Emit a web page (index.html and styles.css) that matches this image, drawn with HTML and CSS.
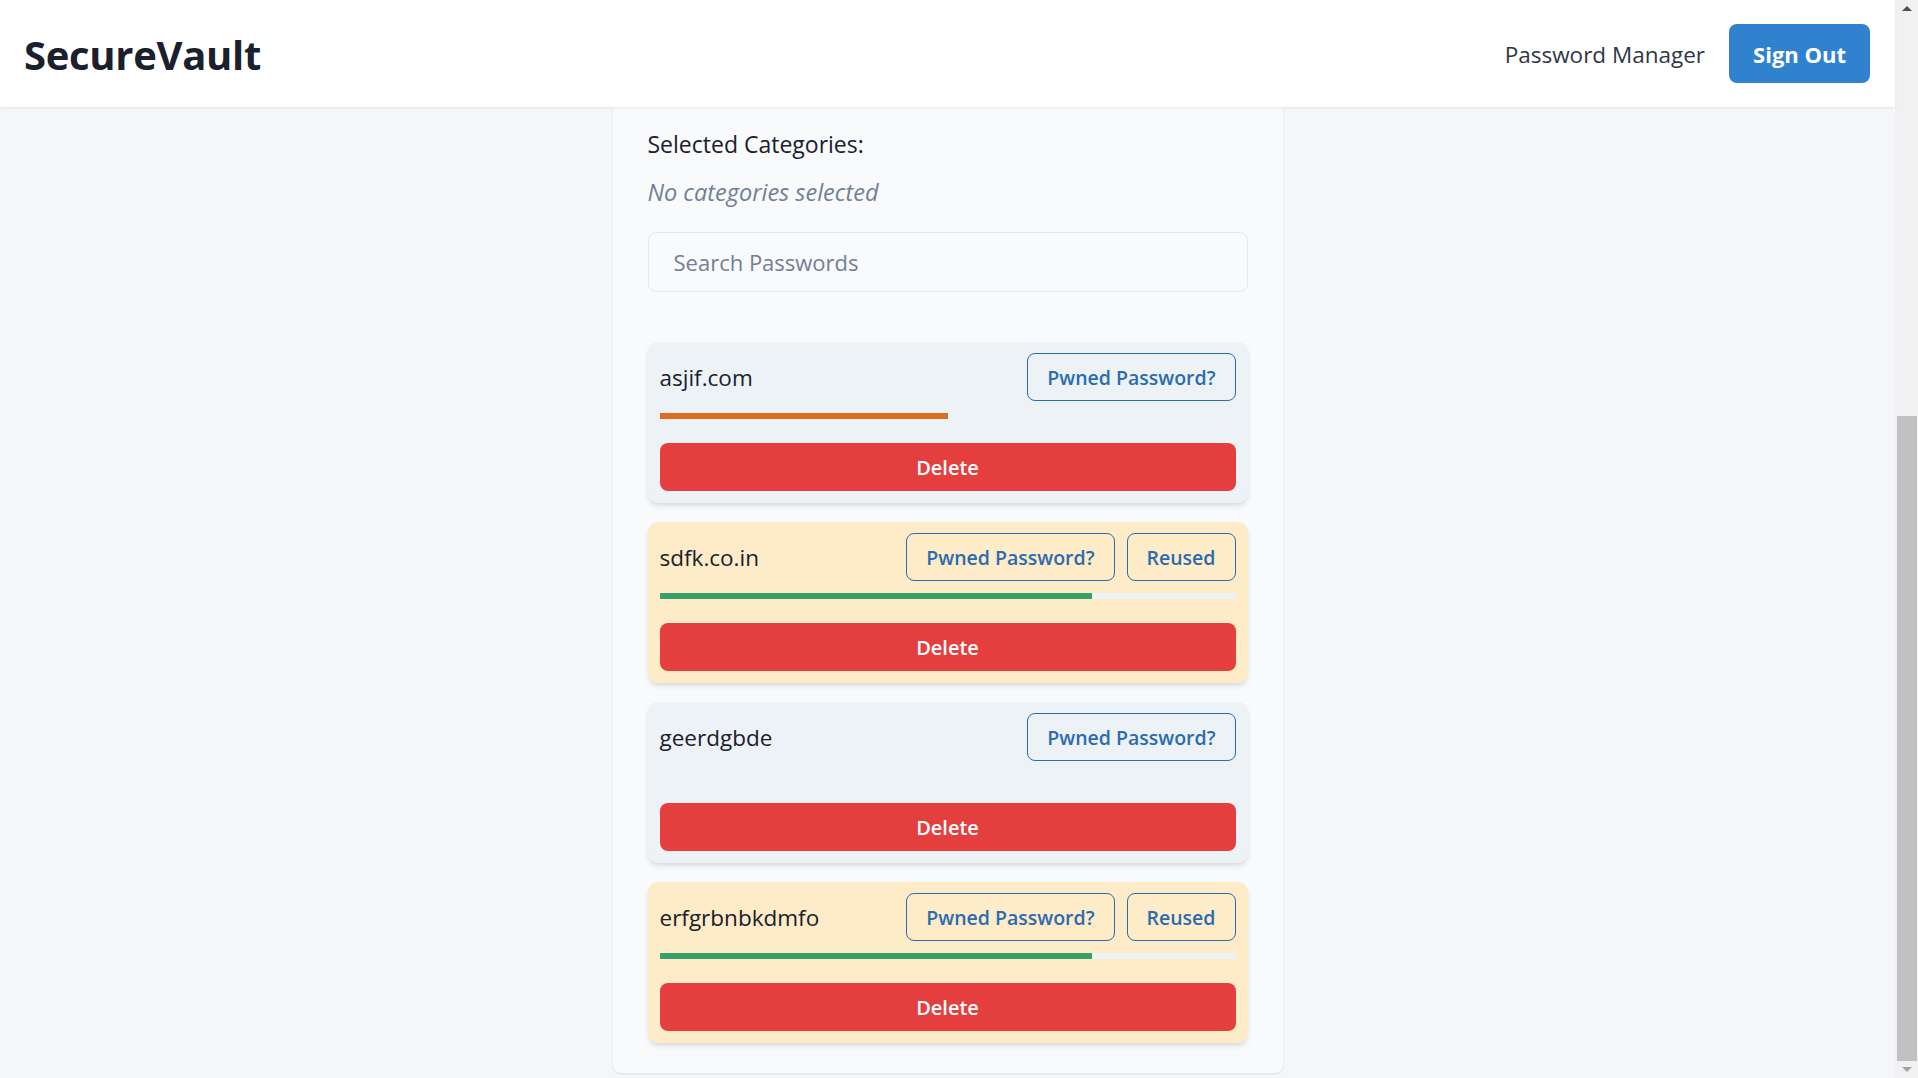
FILE: index.html
```html
<!DOCTYPE html>
<html lang="en">
<head>
<meta charset="utf-8">
<title>SecureVault</title>
<link rel="stylesheet" href="styles.css">
</head>
<body>
<div class="window">
  <div class="app">
    <header class="topbar">
      <div class="logo">SecureVault</div>
      <nav class="topnav">
        <span class="nav-link">Password Manager</span>
        <button class="btn-signout">Sign Out</button>
      </nav>
    </header>
    <main class="page">
      <section class="card">
        <div class="cat-label">Selected Categories:</div>
        <div class="cat-empty">No categories selected</div>
        <input class="search" type="text" placeholder="Search Passwords">
        <ul class="entries">
          <li class="entry">
            <div class="entry-row">
              <span class="entry-name">asjif.com</span>
              <div class="entry-actions">
                <button class="btn-outline">Pwned Password?</button>
              </div>
            </div>
            <div class="meter"><div class="meter-fill fill-orange" style="width:50%"></div></div>
            <button class="btn-delete">Delete</button>
          </li>
          <li class="entry entry-reused">
            <div class="entry-row">
              <span class="entry-name">sdfk.co.in</span>
              <div class="entry-actions">
                <button class="btn-outline">Pwned Password?</button>
                <button class="btn-outline">Reused</button>
              </div>
            </div>
            <div class="meter"><div class="meter-fill fill-green" style="width:75%"></div></div>
            <button class="btn-delete">Delete</button>
          </li>
          <li class="entry">
            <div class="entry-row">
              <span class="entry-name">geerdgbde</span>
              <div class="entry-actions">
                <button class="btn-outline">Pwned Password?</button>
              </div>
            </div>
            <div class="meter"><div class="meter-fill" style="width:0%"></div></div>
            <button class="btn-delete">Delete</button>
          </li>
          <li class="entry entry-reused">
            <div class="entry-row">
              <span class="entry-name">erfgrbnbkdmfo</span>
              <div class="entry-actions">
                <button class="btn-outline">Pwned Password?</button>
                <button class="btn-outline">Reused</button>
              </div>
            </div>
            <div class="meter"><div class="meter-fill fill-green" style="width:75%"></div></div>
            <button class="btn-delete">Delete</button>
          </li>
        </ul>
      </section>
    </main>
  </div>
  <div class="scrollbar" aria-hidden="true">
    <div class="sb-arrow sb-up"></div>
    <div class="sb-track"><div class="sb-thumb"></div></div>
    <div class="sb-arrow sb-down"></div>
  </div>
</div>
</body>
</html>
```
FILE: styles.css
```css
* { box-sizing: border-box; }
html, body { margin: 0; padding: 0; }
body {
  background: #f4f6f9;
  font-family: "Open Sans", "Noto Sans", sans-serif;
  color: #1a202c;
  overflow: hidden;
}
.window {
  display: flex;
  height: 1078px;
}
.app {
  flex: 1;
  display: flex;
  flex-direction: column;
  min-width: 0;
}
.topbar {
  position: relative;
  z-index: 2;
  flex: 0 0 107px;
  background: #ffffff;
  box-shadow: 0 1px 3px rgba(0,0,0,0.07);
  display: flex;
  align-items: center;
  justify-content: space-between;
  padding: 0 25px 0 24px;
}
.logo {
  font-size: 40px;
  font-weight: 700;
  color: #1a202c;
  letter-spacing: -0.3px;
  padding-top: 2px;
}
.topnav {
  display: flex;
  align-items: center;
  gap: 24px;
}
.nav-link {
  font-size: 22.5px;
  color: #2d3748;
  padding-top: 2px;
}
.btn-signout {
  height: 59px;
  padding: 0 24px;
  border: none;
  border-radius: 8px;
  background: #3182ce;
  color: #ffffff;
  font-family: inherit;
  font-size: 22px;
  font-weight: 700;
}
.page {
  flex: 1;
  padding: 0 0 5px;
}
.card {
  width: 670px;
  margin: 0 auto;
  background: #f8fafc;
  border-radius: 0 0 8px 8px;
  box-shadow: 0 1px 3px rgba(0,0,0,0.07), 0 1px 2px rgba(0,0,0,0.04);
  padding: 22px 35px 30px;
}
.cat-label {
  font-size: 23px;
  line-height: 30px;
}
.cat-empty {
  margin-top: 18px;
  font-size: 23.5px;
  line-height: 30px;
  font-style: italic;
  color: #718096;
}
.search {
  display: block;
  width: 100%;
  height: 60px;
  margin-top: 25px;
  padding: 0 25px;
  border: 1px solid #e2e8f0;
  border-radius: 8px;
  background: #f8fafc;
  font-family: inherit;
  font-size: 22px;
  color: #1a202c;
}
.search::placeholder { color: #718096; }
.entries {
  list-style: none;
  margin: 50px 0 0;
  padding: 0;
  display: flex;
  flex-direction: column;
  gap: 19px;
}
.entry {
  background: #edf2f7;
  border-radius: 10px;
  padding: 11px 12px 12px;
  box-shadow: 0 4px 6px -1px rgba(0,0,0,0.1), 0 2px 4px -1px rgba(0,0,0,0.06);
}
.entry-reused { background: #feebc8; }
.entry-row {
  display: flex;
  align-items: center;
  justify-content: space-between;
  height: 48px;
}
.entry-name {
  font-size: 22.5px;
}
.entry-actions {
  display: flex;
  gap: 12px;
}
.btn-outline {
  height: 48px;
  padding: 0 19px;
  border: 1px solid #2b6cb0;
  border-radius: 8px;
  background: transparent;
  color: #2b6cb0;
  font-family: inherit;
  font-size: 19.5px;
  font-weight: 600;
}
.meter {
  margin-top: 12px;
  height: 6px;
  background: #edf2f7;
}
.meter-fill { height: 100%; }
.fill-orange { background: #dd6b20; }
.fill-green { background: #38a169; }
.btn-delete {
  display: block;
  width: 100%;
  height: 48px;
  margin-top: 24px;
  border: none;
  border-radius: 8px;
  background: #e53e3e;
  color: #ffffff;
  font-family: inherit;
  font-size: 20px;
  font-weight: 600;
}
.scrollbar {
  flex: 0 0 23px;
  background: #f1f1f1;
  display: flex;
  flex-direction: column;
  align-items: center;
}
.sb-arrow {
  flex: 0 0 17px;
  width: 100%;
  display: flex;
  align-items: center;
  justify-content: center;
}
.sb-up::before {
  content: "";
  border-left: 5px solid transparent;
  border-right: 5px solid transparent;
  border-bottom: 5px solid #505050;
}
.sb-down::before {
  content: "";
  border-left: 5px solid transparent;
  border-right: 5px solid transparent;
  border-top: 5px solid #a3a3a3;
}
.sb-track {
  flex: 1;
  width: 100%;
  display: flex;
  flex-direction: column;
  justify-content: flex-end;
  padding: 0 1px 0 2px;
}
.sb-thumb {
  height: 645px;
  background: #c1c1c1;
}
```
